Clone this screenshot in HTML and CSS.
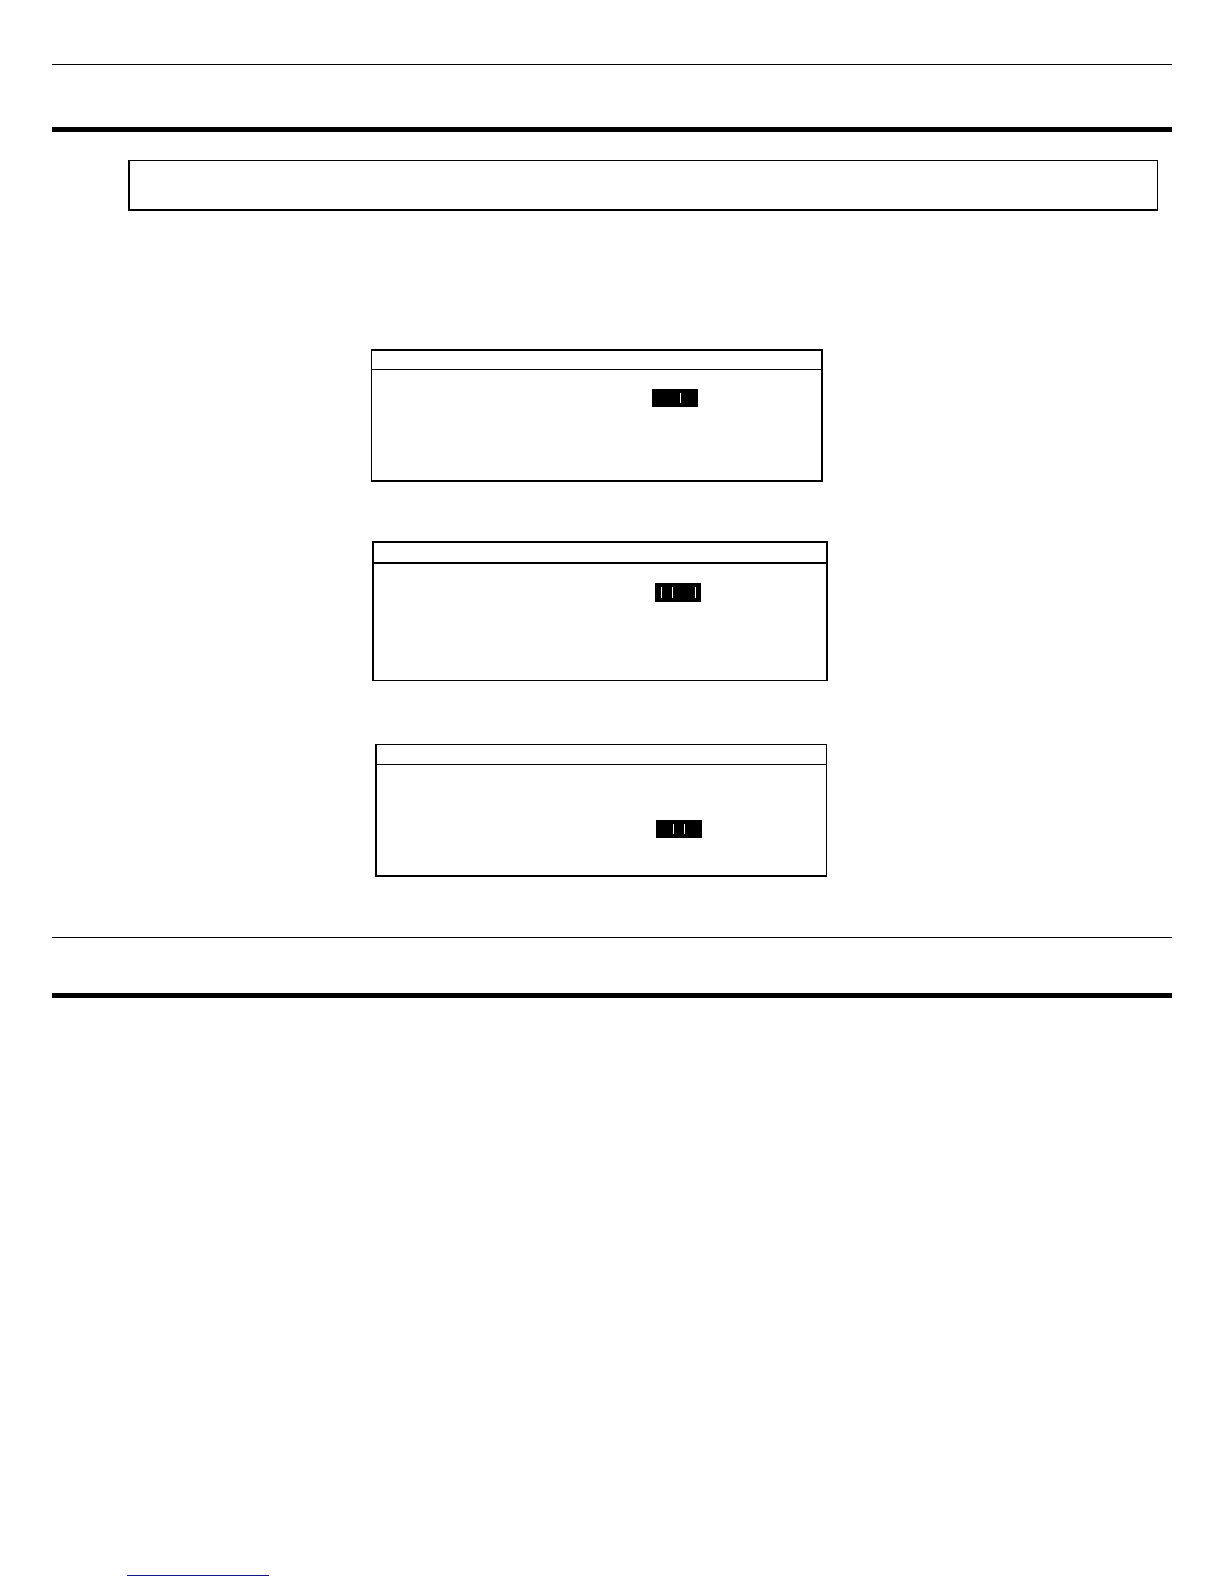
FILE: index.html
```html
<!DOCTYPE html>
<html lang="en">
<head>
<meta charset="utf-8">
<title>Display settings</title>
<link rel="stylesheet" href="styles.css">
</head>
<body>
<main class="page">
  <header class="band band-first"></header>
  <div class="note"></div>
  <div class="panels">
    <section class="panel panel-a">
      <div class="panel-title"></div>
      <div class="panel-body">
        <div class="field"><span></span><span></span><span class="tick"></span><span></span></div>
      </div>
    </section>
    <section class="panel panel-b">
      <div class="panel-title"></div>
      <div class="panel-body">
        <div class="field"><span class="tick"></span><span class="tick"></span><span></span><span class="tick"></span></div>
      </div>
    </section>
    <section class="panel panel-c">
      <div class="panel-title"></div>
      <div class="panel-body">
        <div class="field"><span></span><span class="tick"></span><span class="tick"></span><span></span></div>
      </div>
    </section>
  </div>
  <header class="band band-second"></header>
  <footer class="footer"><a class="footer-link" href="#top" aria-label="Top"></a></footer>
</main>
</body>
</html>
```

FILE: styles.css
```css
* {
  box-sizing: border-box;
}

body {
  margin: 0;
  background: #fff;
  color: #000;
  font-family: "Liberation Sans", sans-serif;
}

.page {
  display: flex;
  flex-direction: column;
  min-height: 100vh;
  padding: 64px 52px 8px;
}

.band {
  border-top: 1px solid #000;
  border-bottom: 5px solid #000;
}

.band-first {
  padding-top: 62px;
}

.band-second {
  margin-top: 60px;
  padding-top: 55px;
}

.note {
  margin: 28px 14px 0 76px;
  padding-top: 48px;
  border: solid #000;
  border-width: 1px 1px 2px 2px;
}

.panels {
  display: flex;
  flex-direction: column;
  margin-top: 138px;
  padding-left: 319px;
}

.panel {
  width: 100%;
  border: solid #000;
}

.panel-title {
  height: 19px;
  border-bottom: 1px solid #000;
}

.panel-body {
  padding: 19px 0 73px 280px;
}

.panel-a {
  max-width: 452px;
  border-width: 2px 2px 2px 1px;
}

.panel-b {
  max-width: 456px;
  margin: 59px 0 0 1px;
  border-width: 2px 2px 1px 2px;
}

.panel-b .panel-title {
  height: 21px;
  border-bottom-width: 2px;
}

.panel-b .panel-body {
  padding: 19px 0 78px 281px;
}

.panel-b .field {
  height: 19px;
}

.panel-c {
  max-width: 452px;
  margin: 63px 0 0 4px;
  border-width: 1px 1px 2px 2px;
}

.panel-c .panel-title {
  height: 20px;
}

.panel-c .panel-body {
  padding: 55px 0 37px 279px;
}

.field {
  display: grid;
  grid-template-columns: 11px 11px 12px 1px;
  width: 46px;
  height: 18px;
  padding: 4px 0 4px 6px;
  background: #000;
}

.tick {
  width: 1px;
  background: #fff;
}

.footer {
  display: flex;
  margin-top: auto;
  padding-left: 75px;
}

.footer-link {
  width: 142px;
  height: 16px;
  border-bottom: 1px solid #14148c;
}
```
